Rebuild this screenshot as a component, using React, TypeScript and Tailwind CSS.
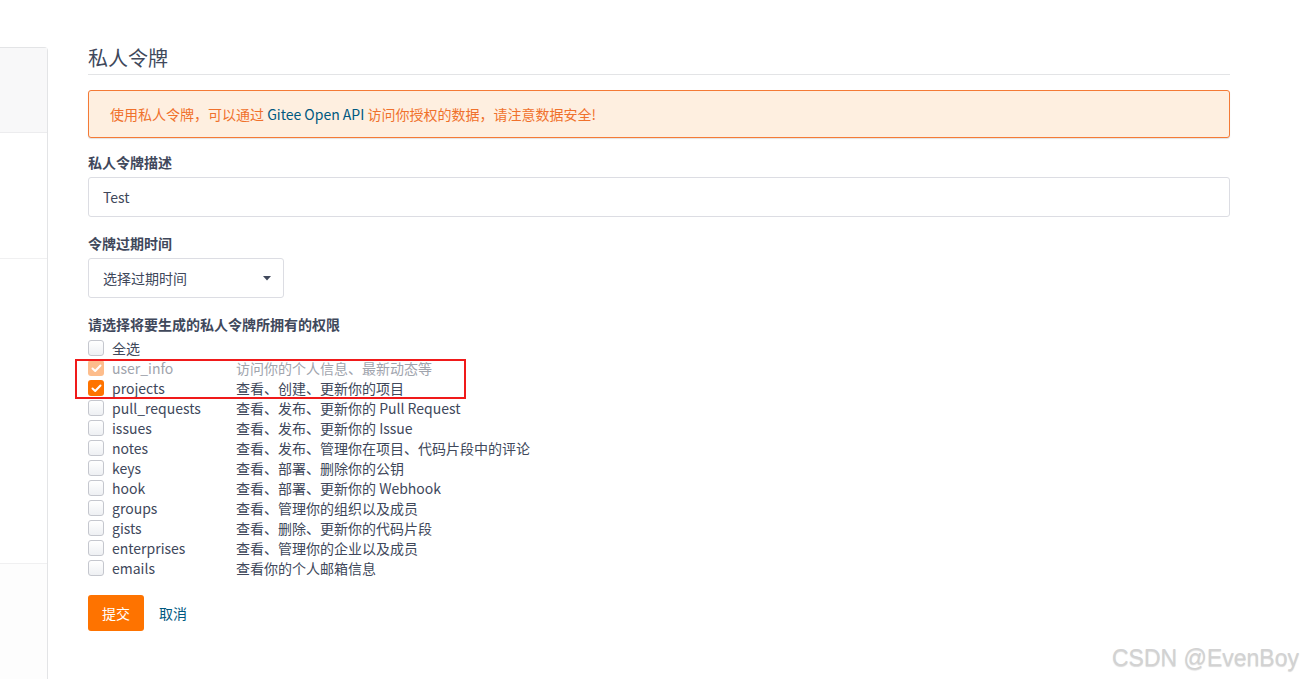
import React from 'react';

const font = { fontFamily: '"Noto Sans CJK SC", "Noto Sans", sans-serif' };

type Scope = { name: string; desc: string; checked?: boolean; disabled?: boolean };

const SCOPES: Scope[] = [
    { name: 'user_info', desc: '访问你的个人信息、最新动态等', checked: true, disabled: true },
    { name: 'projects', desc: '查看、创建、更新你的项目', checked: true },
    { name: 'pull_requests', desc: '查看、发布、更新你的 Pull Request' },
    { name: 'issues', desc: '查看、发布、更新你的 Issue' },
    { name: 'notes', desc: '查看、发布、管理你在项目、代码片段中的评论' },
    { name: 'keys', desc: '查看、部署、删除你的公钥' },
    { name: 'hook', desc: '查看、部署、更新你的 Webhook' },
    { name: 'groups', desc: '查看、管理你的组织以及成员' },
    { name: 'gists', desc: '查看、删除、更新你的代码片段' },
    { name: 'enterprises', desc: '查看、管理你的企业以及成员' },
    { name: 'emails', desc: '查看你的个人邮箱信息' },
];

function Box({ checked, disabled }: { checked?: boolean; disabled?: boolean }) {
    if (checked) {
        return (
            <span
                className={`w-4 h-4 rounded-[3px] flex items-center justify-center shrink-0 ${
                    disabled ? 'bg-[#fdbd8c]' : 'bg-[#fe7300]'
                }`}
            >
                <svg width="11" height="9" viewBox="0 0 11 9" fill="none">
                    <path d="M1.5 4.5 L4.2 7 L9.5 1.5" stroke="white" strokeWidth="2" strokeLinecap="round" strokeLinejoin="round" />
                </svg>
            </span>
        );
    }
    return (
        <span className="w-4 h-4 rounded-[3px] border border-[#c5c7ce] bg-gradient-to-b from-white to-[#eef0f3] shrink-0" />
    );
}

export default function App() {
    return (
        <div className="relative w-full h-[679px] bg-white flex overflow-hidden text-[#40485b]" style={font}>
            <aside className="w-[48px] shrink-0 pt-[47px] h-full">
                <div className="h-full border-r border-t border-[#e3e4e6] rounded-tr-[4px] flex flex-col">
                    <div className="h-[85px] bg-[#f8f8f9] border-b border-[#ececee]" />
                    <div className="h-[126px] border-b border-[#f0f0f1]" />
                    <div className="h-[305px] border-b border-[#f0f0f1]" />
                    <div className="flex-1 bg-[#fdfdfd]" />
                </div>
            </aside>

            <main className="ml-[40px] w-[1142px] pt-[44px]">
                <h2 className="text-[20px] leading-[28px] font-normal text-[#40485b] pb-[2px] border-b border-[#e3e4e6]">
                    私人令牌
                </h2>

                <div className="mt-[15px] h-[48px] rounded-[3px] border border-[#f47a36] bg-[#feefe0] flex items-center px-[21px] text-[14px] text-[#f0712c] shadow-[0_1px_1px_rgba(0,0,0,0.12)]">
                    使用私人令牌，可以通过&nbsp;<span className="text-[#005980]">Gitee Open API</span>&nbsp;访问你授权的数据，请注意数据安全!
                </div>

                <div className="mt-[14px] text-[14px] leading-[20px] font-bold">私人令牌描述</div>
                <div className="mt-[5px] h-[40px] rounded-[3px] border border-[#dcdde3] flex items-center px-[14px] text-[14px] text-[#40485b]">
                    Test
                </div>

                <div className="mt-[16px] text-[14px] leading-[20px] font-bold">令牌过期时间</div>
                <div className="mt-[5px] w-[196px] h-[40px] rounded-[3px] border border-[#dcdde3] flex items-center justify-between pl-[14px] pr-[12px] text-[14px] text-[#40485b]">
                    <span>选择过期时间</span>
                    <svg width="8" height="5" viewBox="0 0 8 5">
                        <path d="M0 0 H8 L4 4.5 Z" fill="#40485b" />
                    </svg>
                </div>

                <div className="mt-[16px] text-[14px] leading-[20px] font-bold">请选择将要生成的私人令牌所拥有的权限</div>

                <div className="mt-[4px] relative flex flex-col text-[14px]">
                    <div className="h-[20px] flex items-center gap-[8px]">
                        <Box />
                        <span>全选</span>
                    </div>
                    {SCOPES.map((s) => (
                        <div
                            key={s.name}
                            className={`h-[20px] flex items-center gap-[8px] ${s.disabled ? 'text-[#a0a4ad]' : 'text-[#40485b]'}`}
                        >
                            <Box checked={s.checked} disabled={s.disabled} />
                            <span className="w-[116px]">{s.name}</span>
                            <span>{s.desc}</span>
                        </div>
                    ))}
                    <div className="absolute left-[-13px] top-[21px] w-[391px] h-[40px] border-2 border-[#f01a1a] pointer-events-none" />
                </div>

                <div className="mt-[17px] flex items-center gap-[15px]">
                    <button className="w-[56px] h-[36px] rounded-[3px] bg-[#fe7300] text-white text-[14px]">提交</button>
                    <span className="text-[14px] text-[#005980]">取消</span>
                </div>
            </main>

            <div
                className="absolute left-[1112px] top-[641px] text-[23px] text-[#d2d2d2]"
                style={{ fontFamily: '"Liberation Sans", sans-serif', textShadow: '0 1px 1px rgba(0,0,0,0.15)' }}
            >
                CSDN @EvenBoy
            </div>
        </div>
    );
}
